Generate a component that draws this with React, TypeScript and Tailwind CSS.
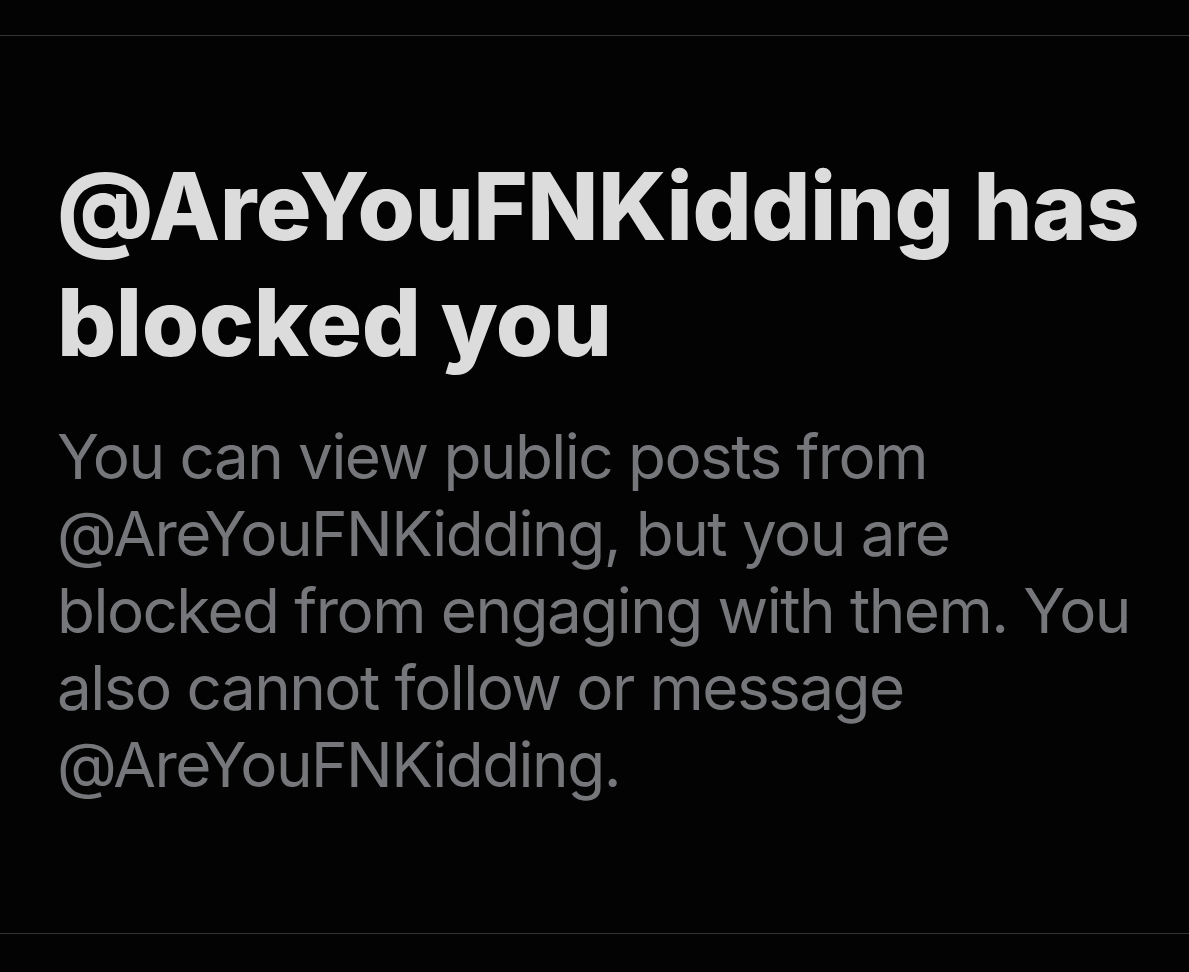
export default function App() {
  return (
    <div className="w-[1189px] h-[972px] bg-[#030303] pt-[35px] font-['Inter',_sans-serif] overflow-hidden">
      <div className="h-[899px] border-y border-[#343434] flex flex-col pl-[57px] pr-[40px] pt-[112px]">
        <h1 className="text-[93px] leading-[116px] font-extrabold tracking-[-0.005em] text-[#dcdcdc]">
          @AreYouFNKidding has blocked you
        </h1>
        <p className="mt-[38px] text-[62px] leading-[77px] text-[#75777b] tracking-[-0.025em]">
          You can view public posts from @AreYouFNKidding, but you are blocked from engaging with them. You also cannot follow or message @AreYouFNKidding.
        </p>
      </div>
    </div>
  );
}
